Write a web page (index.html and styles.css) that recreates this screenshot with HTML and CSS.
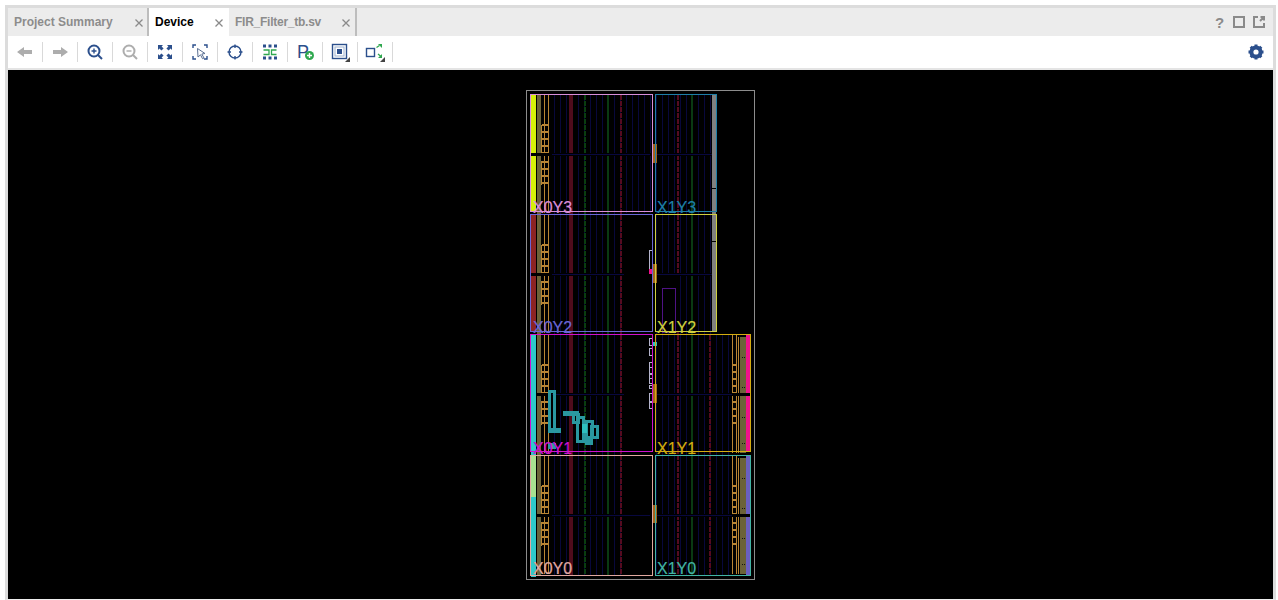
FILE: index.html
```html
<!DOCTYPE html>
<html lang="en">

<head>
    <meta charset="UTF-8">
    <title>Device</title>
    <link rel="stylesheet" href="styles.css">
</head>

<body>
    <div class="panel">
        <div class="tabbar">
            <div class="tab tab-summary">
                <span>Project Summary</span>
                <svg class="close" viewBox="0 0 8 8"><path d="M0.5 0.5L7.5 7.5M7.5 0.5L0.5 7.5" /></svg>
            </div>
            <div class="tab tab-device active">
                <span>Device</span>
                <svg class="close" viewBox="0 0 8 8"><path d="M0.5 0.5L7.5 7.5M7.5 0.5L0.5 7.5" /></svg>
            </div>
            <div class="tab tab-source">
                <span>FIR_Filter_tb.sv</span>
                <svg class="close" viewBox="0 0 8 8"><path d="M0.5 0.5L7.5 7.5M7.5 0.5L0.5 7.5" /></svg>
            </div>
            <div class="window-tools">
                <span class="help">?</span>
                <svg class="win-icon" viewBox="0 0 12 12"><rect x="1" y="1" width="10" height="10" /></svg>
                <svg class="win-icon" viewBox="0 0 12 12"><path d="M5 1H1V11H11V7M7.500 1H11V4.500M11 1L7 5" /></svg>
            </div>
        </div>

        <div class="toolbar">
            <div class="tool">
                <svg class="ico" viewBox="0 0 20 20"><path class="fill-off" d="M2 10L9 5V8H17V12H9V15Z" /></svg>
            </div>
            <div class="tool">
                <svg class="ico" viewBox="0 0 20 20"><path class="fill-off" d="M18 10L11 5V8H3V12H11V15Z" /></svg>
            </div>
            <div class="tool">
                <svg class="ico" viewBox="0 0 20 20">
                    <circle class="line-blue" cx="9" cy="9" r="5.5" />
                    <path class="line-blue thin" d="M6.5 9H11.5M9 6.5V11.5" />
                    <path class="line-blue" d="M13 13L17 17" />
                </svg>
            </div>
            <div class="tool">
                <svg class="ico" viewBox="0 0 20 20">
                    <circle class="line-off" cx="9" cy="9" r="5.5" />
                    <path class="line-off thin" d="M6.5 9H11.5" />
                    <path class="line-off" d="M13 13L17 17" />
                </svg>
            </div>
            <div class="tool">
                <svg class="ico" viewBox="0 0 20 20">
                    <path class="fill-blue" d="M3 3H8L6.6 4.4L8.6 6.4L6.4 8.6L4.4 6.6L3 8ZM17 3V8L15.6 6.6L13.6 8.6L11.4 6.4L13.4 4.4L12 3ZM3 17V12L4.4 13.4L6.4 11.4L8.6 13.6L6.6 15.6L8 17ZM17 17H12L13.4 15.6L11.4 13.6L13.6 11.4L15.6 13.4L17 12Z" />
                </svg>
            </div>
            <div class="tool">
                <svg class="ico" viewBox="0 0 20 20">
                    <path class="line-blue thin" d="M3 6V3H6M14 3H17V6M3 14V17H6M14 17H17V14" />
                    <path class="cursor" d="M7.5 6.5L15 11.5L11.8 12L14 16L12.5 16.7L10.5 12.8L8 15Z" />
                </svg>
            </div>
            <div class="tool">
                <svg class="ico" viewBox="0 0 20 20">
                    <circle class="line-blue thin" cx="10" cy="10" r="6" />
                    <path class="line-blue thin" d="M10 2.5V6M10 14V17.5M2.5 10H6M14 10H17.5" />
                </svg>
            </div>
            <div class="tool">
                <svg class="ico" viewBox="0 0 20 20">
                    <path class="fill-blue" d="M3 2.500H6V5.500H3ZM8.500 2.500H11.500V5.500H8.500ZM14 2.500H17V5.500H14ZM3 14.500H6V17.500H3ZM8.500 14.500H11.500V17.500H8.500ZM14 14.500H17V17.500H14Z" />
                    <path class="line-green" d="M3.500 8H9V12.500H3.500M16.500 8H11.500V12.500H16.500" />
                </svg>
            </div>
            <div class="tool">
                <svg class="ico" viewBox="0 0 20 20">
                    <text class="ico-letter" x="2" y="16">P</text>
                    <circle class="fill-green" cx="14.500" cy="13.500" r="4.500" />
                    <path class="line-white" d="M12 13.500H17M14.500 11V16" />
                </svg>
            </div>
            <div class="tool">
                <svg class="ico" viewBox="0 0 20 20">
                    <rect class="line-blue thin" x="2.500" y="2.500" width="14" height="14" />
                    <rect class="box-mid" x="5" y="5" width="9" height="9" />
                    <rect class="fill-blue" x="7" y="7" width="5" height="5" />
                    <path class="fill-dark" d="M20 15V20H15Z" />
                </svg>
            </div>
            <div class="tool">
                <svg class="ico" viewBox="0 0 20 20">
                    <rect class="line-blue thin" x="1.500" y="6.500" width="8" height="8" />
                    <path class="line-green" d="M11.500 5.500L14.500 3.500M13 12L16 14.500" />
                    <path class="fill-green" d="M13 2H17V6ZM13 16H17V12Z" />
                    <path class="fill-dark" d="M20 15V20H15Z" />
                </svg>
            </div>
            <div class="gear">
                <svg class="ico" viewBox="0 0 20 20">
                    <path class="gear-teeth" d="M10 2.500V17.500M2.500 10H17.500M4.700 4.700L15.300 15.300M15.300 4.700L4.700 15.300" />
                    <circle class="gear-ring" cx="10" cy="10" r="4.600" />
                </svg>
            </div>
        </div>

        <div class="canvas">
            <!-- device view: coordinates are page pixels -->
            <svg class="device" viewBox="8 70 1265 529" width="1265" height="529">
                <defs>
                    <pattern id="fabric" width="6" height="8" patternUnits="userSpaceOnUse">
                        <rect x="2" y="0" width="1" height="8" class="navy-fill" />
                    </pattern>
                    <g id="ladder">
                        <path class="rail" d="M1.500 0V118M5.500 0V118M-1.500 30V60M-1.500 66V90" />
                        <path class="rung" d="M-1 30H5M-1 37H5M-1 44H5M-1 51H5M-1 58H5M-1 67H5M-1 74H5M-1 81H5M-1 88H5" />
                    </g>
                    <g id="ladder-right">
                        <path class="rail" d="M0.500 0V118M4.500 0V118M6.500 2V118" />
                        <path class="rung" d="M0 30H4M0 37H4M0 44H4M0 51H4M0 58H4M0 67H4M0 74H4M0 81H4M0 88H4" />
                        <rect class="olive-fill" x="8" y="2" width="6" height="116" />
                        <path class="dots" d="M10 22H13M10 52H13M10 82H13M10 108H13" />
                    </g>
                </defs>

                <rect x="526.500" y="90.500" width="228" height="489" class="outer" />

                <!-- fabric columns -->
                <rect x="550" y="95" width="74" height="481" fill="url(#fabric)" />
                <rect x="624" y="95" width="28" height="118" fill="url(#fabric)" />
                <rect x="656" y="95" width="56" height="481" fill="url(#fabric)" />
                <rect x="712" y="335" width="20" height="241" fill="url(#fabric)" />
                <rect x="569" y="95" width="4" height="481" class="bram" />
                <path class="dsp-green" d="M584.500 95V576" />
                <path class="clb-green" d="M607.500 95V576" />
                <path class="dsp-red" d="M621 95V576" />
                <path class="dsp-red" d="M678 95V576" />
                <path class="clb-green" d="M692 95V576" />
                <path class="dsp-red" d="M710 335V576" />

                <!-- black gap in X1Y2 -->
                <rect x="656" y="276" width="24" height="56" class="gap" />

                <!-- left edge columns -->
                <rect x="531" y="95" width="5" height="116" class="bank-lime" />
                <rect x="531" y="215" width="5" height="117" class="bank-red" />
                <rect x="531" y="335" width="5" height="122" class="bank-cyan" />
                <rect x="531" y="456" width="5" height="41" class="bank-green" />
                <rect x="531" y="497" width="5" height="80" class="bank-cyan" />
                <rect x="537" y="95" width="4" height="481" class="olive-fill" />
                <use href="#ladder" x="543" y="95" />
                <use href="#ladder" x="543" y="215" />
                <use href="#ladder" x="543" y="335" />
                <use href="#ladder" x="543" y="456" />

                <!-- right edge columns -->
                <use href="#ladder-right" x="732" y="335" />
                <use href="#ladder-right" x="732" y="456" />
                <rect x="746" y="335" width="4" height="117" class="bank-pink" />
                <rect x="746" y="456" width="4" height="119" class="bank-purple" />

                <!-- horizontal clock rows -->
                <rect x="531" y="153" width="181" height="3" class="gap" />
                <rect x="531" y="273" width="181" height="3" class="gap" />
                <rect x="536" y="393" width="215" height="3" class="gap" />
                <rect x="536" y="514" width="215" height="3" class="gap" />
                <path class="navy" d="M552 154.500H650M657 154.500H712M552 274.500H624M657 274.500H712M552 394.500H624M657 394.500H732M552 515.500H650M657 515.500H732" />

                <!-- gray column of the upper right regions -->
                <rect x="712" y="95" width="4" height="237" class="gray-fill" />
                <path class="gap-line" d="M712 188.500H716M712 241.500H716" />

                <!-- brackets next to the spine -->
                <path class="bracket" d="M652 250.500H649.500V269" />
                <rect x="649" y="269" width="3" height="5" class="bank-pink" />
                <path class="bracket" d="M652 338.500H649.500V345H652M652 348.500H649.500V355H652M652 362.500H649.500V373H652M649.500 367.500H652M652 374.500H649.500V383H652M649.500 378.500H652M652 385.500H649.500V388H652M652 393.500H649.500V401H652M652 402.500H649.500V408H652" />
                <rect x="653" y="342" width="4" height="4" class="net-bright" />

                <!-- pblock in X1Y2 -->
                <rect x="662.500" y="288.500" width="13" height="44" class="pblock" />

                <!-- clock spine -->
                <rect x="653" y="144" width="4" height="19" class="spine" />
                <rect x="653" y="264" width="4" height="19" class="spine" />
                <rect x="653" y="384" width="4" height="19" class="spine" />
                <rect x="653" y="505" width="4" height="18" class="spine" />

                <!-- placed logic -->
                <rect x="549.500" y="391.500" width="5" height="38" class="net" />
                <rect x="548" y="428" width="13" height="5" class="net-fill" />
                <rect x="563" y="411" width="16" height="5" class="net-fill" />
                <rect x="573.500" y="414" width="4.500" height="8" class="net" />
                <rect x="577.500" y="417.500" width="6" height="23.500" class="net" />
                <rect x="586.500" y="421.500" width="6" height="16" class="net" />
                <rect x="591.500" y="426.500" width="6" height="11" class="net" />
                <rect x="585" y="439" width="8" height="6" class="net-fill" />
                <rect x="548" y="443" width="8" height="6" class="net-fill" />
                <rect x="582" y="424" width="5" height="9" class="net-bright" />

                <!-- clock regions -->
                <rect x="530.500" y="94.500" width="122" height="117" class="region r-x0y3" />
                <rect x="655.500" y="94.500" width="61" height="117" class="region r-x1y3" />
                <rect x="530.500" y="214.500" width="122" height="117" class="region r-x0y2" />
                <rect x="655.500" y="214.500" width="61" height="117" class="region r-x1y2" />
                <rect x="530.500" y="334.500" width="122" height="117" class="region r-x0y1" />
                <rect x="655.500" y="334.500" width="95" height="117" class="region r-x1y1" />
                <rect x="530.500" y="455.500" width="122" height="120" class="region r-x0y0" />
                <rect x="655.500" y="455.500" width="95" height="120" class="region r-x1y0" />

                <text x="533" y="213" class="label t-x0y3">X0Y3</text>
                <text x="657" y="213" class="label t-x1y3">X1Y3</text>
                <text x="533" y="333" class="label t-x0y2">X0Y2</text>
                <text x="657" y="333" class="label t-x1y2">X1Y2</text>
                <text x="533" y="454" class="label t-x0y1">X0Y1</text>
                <text x="657" y="454" class="label t-x1y1">X1Y1</text>
                <text x="533" y="574" class="label t-x0y0">X0Y0</text>
                <text x="657" y="574" class="label t-x1y0">X1Y0</text>
            </svg>
        </div>
    </div>
</body>

</html>
```

FILE: styles.css
```css
html,
body {
    margin: 0;
    height: 100%;
    background-color: #fff;
    overflow: hidden;
}

body {
    font-family: "Liberation Sans", Arial, sans-serif;
}

.panel {
    display: flex;
    flex-direction: column;
    box-sizing: border-box;
    width: 1271px;
    height: 595px;
    margin: 5px 0 0 5px;
    border: 3px solid #dcdcdc;
    border-bottom: 1px solid #eee;
}

/* tabs */
.tabbar {
    display: flex;
    height: 28px;
    background-color: #ececec;
}

.tab {
    display: flex;
    align-items: center;
    box-sizing: border-box;
    height: 28px;
    font-size: 12px;
    font-weight: bold;
    color: #8c8c8c;
}

.tab-summary {
    width: 141px;
    padding: 0 4px 0 6px;
    border-right: 2px solid #bdbdbd;
}

.tab-device {
    width: 80px;
    padding: 0 6px;
}

.tab-source {
    width: 128px;
    padding: 0 5px 0 6px;
    border-right: 2px solid #bdbdbd;
    letter-spacing: -0.25px;
}

.tab.active {
    background-color: #fff;
    color: #000;
}

.close {
    width: 8px;
    height: 8px;
    margin-left: auto;
    margin-top: 2px;
    fill: none;
    stroke: #8a8a8a;
    stroke-width: 1.3;
}

.window-tools {
    display: flex;
    align-items: center;
    gap: 8px;
    margin-left: auto;
    padding-right: 8px;
}

.help {
    width: 11px;
    font-size: 15px;
    font-weight: bold;
    text-align: center;
    color: #8a8a8a;
}

.win-icon {
    width: 12px;
    height: 12px;
    fill: none;
    stroke: #8a8a8a;
    stroke-width: 2;
}

/* toolbar */
.toolbar {
    display: flex;
    align-items: center;
    height: 32px;
    border-bottom: 2px solid #e4e4e4;
    background-color: #fff;
}

.tool {
    display: flex;
    align-items: center;
    justify-content: center;
    box-sizing: border-box;
    width: 35px;
    height: 20px;
    border-right: 1px solid #d9d9d9;
}

.gear {
    margin-left: auto;
    margin-right: 7px;
    height: 20px;
}

.ico {
    display: block;
    width: 20px;
    height: 20px;
}

.fill-off {
    fill: #adadad;
}

.fill-blue {
    fill: #2b4f8c;
}

.fill-green {
    fill: #2fa84f;
}

.fill-dark {
    fill: #444;
}

.line-blue,
.line-off,
.line-green,
.line-white,
.box-mid {
    fill: none;
    stroke-width: 2;
}

.line-blue {
    stroke: #2b4f8c;
}

.line-off {
    stroke: #adadad;
}

.line-green {
    stroke: #2fa84f;
    stroke-width: 1.3;
}

.line-white {
    stroke: #fff;
    stroke-width: 1.4;
}

.box-mid {
    stroke: #9db2d0;
    stroke-width: 1;
}

.thin {
    stroke-width: 1.4;
}

.cursor {
    fill: #fff;
    stroke: #5a6f92;
    stroke-width: 1;
}

.ico-letter {
    font-family: "Liberation Sans", Arial, sans-serif;
    font-size: 18px;
    fill: #2b4f8c;
}

.gear-teeth {
    fill: none;
    stroke: #2b4f8c;
    stroke-width: 3;
}

.gear-ring {
    fill: #fff;
    stroke: #2b4f8c;
    stroke-width: 4;
}

/* device view */
.canvas {
    flex: 1;
    background-color: #000;
    overflow: hidden;
}

.device {
    display: block;
    shape-rendering: crispEdges;
}

.outer {
    fill: none;
    stroke: #8c8c8c;
}

.navy-fill {
    fill: #08083c;
}

.navy {
    fill: none;
    stroke: #08083f;
}

.bram {
    fill: #4f0c1c;
}

.dsp-green,
.clb-green,
.dsp-red {
    fill: none;
    stroke-width: 2;
}

.dsp-green {
    stroke: #0a3d10;
    stroke-dasharray: 5 1;
}

.clb-green {
    stroke: #0a3a12;
}

.dsp-red {
    stroke: #550b20;
    stroke-dasharray: 5 1;
}

.gap {
    fill: #000;
}

.gap-line {
    fill: none;
    stroke: #000;
}

.bank-lime {
    fill: #d6ef0a;
}

.bank-red {
    fill: #8c2424;
}

.bank-cyan {
    fill: #2fc9c9;
}

.bank-green {
    fill: #a8e090;
}

.bank-pink {
    fill: #f0108c;
}

.bank-purple {
    fill: #6a5fc0;
}

.olive-fill {
    fill: #6b6238;
}

.gray-fill {
    fill: #808080;
}

.dots {
    fill: none;
    stroke: #111;
    stroke-dasharray: 1 1;
}

.rail {
    fill: none;
    stroke: #b98534;
    stroke-width: 1;
}

.rung {
    fill: none;
    stroke: #b98534;
    stroke-width: 2;
}

.bracket {
    fill: none;
    stroke: #b4b4cc;
}

.pblock {
    fill: #000;
    stroke: #4f1285;
}

.spine {
    fill: #a4641c;
}

.net {
    fill: none;
    stroke: #2a98a0;
    stroke-width: 3;
}

.net-fill {
    fill: #2a98a0;
}

.net-bright {
    fill: #2fc0c0;
}

.region {
    fill: none;
}

.label {
    font-family: "Liberation Sans", Arial, sans-serif;
    font-size: 16px;
    stroke-width: 0.2;
}

.r-x0y3 { stroke: #d98ed9; }
.r-x1y3 { stroke: #1d7fa8; }
.r-x0y2 { stroke: #6a66d6; }
.r-x1y2 { stroke: #cfd040; }
.r-x0y1 { stroke: #d010d0; }
.r-x1y1 { stroke: #d4ac10; }
.r-x0y0 { stroke: #e0a8a0; }
.r-x1y0 { stroke: #42b4a4; }

.t-x0y3 { fill: #d98ed9; stroke: #d98ed9; }
.t-x1y3 { fill: #1d7fa8; stroke: #1d7fa8; }
.t-x0y2 { fill: #6a66d6; stroke: #6a66d6; }
.t-x1y2 { fill: #cfd040; stroke: #cfd040; }
.t-x0y1 { fill: #d010d0; stroke: #d010d0; }
.t-x1y1 { fill: #d4ac10; stroke: #d4ac10; }
.t-x0y0 { fill: #e0a8a0; stroke: #e0a8a0; }
.t-x1y0 { fill: #42b4a4; stroke: #42b4a4; }
```
